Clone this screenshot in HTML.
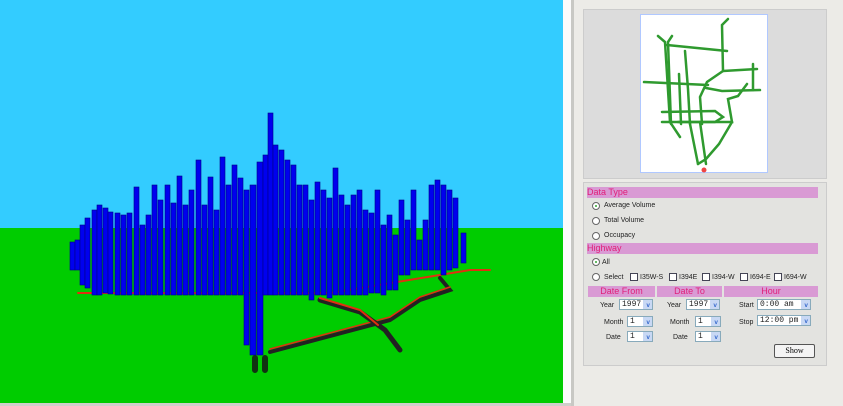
<!DOCTYPE html>
<html><head><meta charset="utf-8"><style>
*{margin:0;padding:0;box-sizing:border-box}
body{width:843px;height:406px;overflow:hidden;background:#ecebe7;font-family:"Liberation Sans",sans-serif;position:relative}
.abs{position:absolute}
.t{font-size:7px;color:#222;position:absolute;white-space:nowrap}
.hd{position:absolute;background:#d99ad4;color:#e0207a;font-size:9px;line-height:11px;height:11px}
.rad{position:absolute;width:8px;height:8px;border:1px solid #666;border-radius:50%;background:#fff}
.rad.on::after{content:"";position:absolute;left:2px;top:2px;width:2px;height:2px;background:#3a3;border-radius:50%}
.cb{position:absolute;width:8px;height:8px;border:1px solid #445;background:#fff}
.sel{position:absolute;height:11px;border:1px solid #8ab;background:#fff;font-family:"Liberation Mono",monospace;font-size:8px;line-height:9px;padding-left:2px;color:#222}
.sel::after{content:"";position:absolute;right:0;top:0;width:9px;height:9px;background:#c8d8f4}
.sel b{position:absolute;right:2px;top:1px;font-size:6px;color:#36c;z-index:1;font-weight:bold}
</style></head><body>
<svg class="abs" style="left:0;top:0" width="843" height="406">
<rect x="0" y="0" width="563" height="228" fill="#33ccff"/>
<rect x="0" y="228" width="563" height="175" fill="#00cc00"/>
<rect x="563" y="0" width="8" height="406" fill="#fbfbfb"/>
<rect x="571" y="0" width="3" height="406" fill="#c8c8c4"/>
<rect x="0" y="403" width="571" height="3" fill="#cfcfcb"/>
<g fill="none" stroke-linecap="round">
<path d="M78 293 L330 293 L470 270 L490 270" stroke="#e03010" stroke-width="2"/>
<path d="M270 352 L390 320 L420 300 L450 290 L440 278" stroke="#222" stroke-width="4"/>
<path d="M270 349 L390 317 L420 297 L450 287" stroke="#e03010" stroke-width="1.5"/>
<path d="M320 300 L360 312 L385 330 L400 350" stroke="#222" stroke-width="5"/>
<path d="M320 298 L360 310 L378 325" stroke="#e03010" stroke-width="2"/>
<path d="M255 358 L255 370 M265 358 L265 370" stroke="#113311" stroke-width="6"/>
</g>
<g fill="#0000ee" stroke="#000088" stroke-width="0.6">
<rect x="70" y="242" width="5" height="28"/><rect x="75" y="240" width="5" height="30"/>
<rect x="80" y="225" width="5" height="60"/><rect x="85" y="218" width="5" height="70"/>
<rect x="92" y="210" width="5" height="85"/><rect x="97" y="205" width="5" height="90"/>
<rect x="103" y="208" width="5" height="85"/><rect x="108" y="212" width="5" height="82"/>
<rect x="115" y="213" width="5" height="82"/><rect x="121" y="215" width="5" height="80"/>
<rect x="127" y="213" width="5" height="82"/><rect x="134" y="187" width="5" height="108"/>
<rect x="140" y="225" width="5" height="70"/><rect x="146" y="215" width="5" height="80"/>
<rect x="152" y="185" width="5" height="110"/><rect x="158" y="200" width="5" height="95"/>
<rect x="165" y="185" width="5" height="110"/><rect x="171" y="203" width="5" height="92"/>
<rect x="177" y="176" width="5" height="119"/><rect x="183" y="205" width="5" height="90"/>
<rect x="189" y="190" width="5" height="105"/><rect x="196" y="160" width="5" height="135"/>
<rect x="202" y="205" width="5" height="90"/><rect x="208" y="177" width="5" height="118"/>
<rect x="214" y="210" width="5" height="85"/><rect x="220" y="157" width="5" height="138"/>
<rect x="226" y="185" width="5" height="110"/><rect x="232" y="165" width="5" height="130"/>
<rect x="238" y="178" width="5" height="117"/><rect x="244" y="190" width="5" height="155"/>
<rect x="250" y="185" width="6" height="170"/><rect x="257" y="162" width="6" height="193"/>
<rect x="263" y="155" width="5" height="140"/><rect x="268" y="113" width="5" height="182"/>
<rect x="273" y="145" width="5" height="150"/><rect x="279" y="150" width="5" height="145"/>
<rect x="285" y="160" width="5" height="135"/><rect x="291" y="165" width="5" height="130"/>
<rect x="297" y="185" width="5" height="110"/><rect x="303" y="185" width="5" height="110"/>
<rect x="309" y="200" width="5" height="100"/><rect x="315" y="182" width="5" height="113"/>
<rect x="321" y="190" width="5" height="105"/><rect x="327" y="198" width="5" height="100"/>
<rect x="333" y="168" width="5" height="127"/><rect x="339" y="195" width="5" height="100"/>
<rect x="345" y="205" width="5" height="90"/><rect x="351" y="195" width="5" height="100"/>
<rect x="357" y="190" width="5" height="105"/><rect x="363" y="210" width="5" height="85"/>
<rect x="369" y="213" width="5" height="80"/><rect x="375" y="190" width="5" height="103"/>
<rect x="381" y="225" width="5" height="70"/><rect x="387" y="215" width="5" height="75"/>
<rect x="393" y="235" width="5" height="55"/><rect x="399" y="200" width="5" height="75"/>
<rect x="405" y="220" width="5" height="55"/><rect x="411" y="190" width="5" height="80"/>
<rect x="417" y="240" width="5" height="30"/><rect x="423" y="220" width="5" height="50"/>
<rect x="429" y="185" width="5" height="85"/><rect x="435" y="180" width="5" height="90"/>
<rect x="441" y="185" width="5" height="90"/><rect x="447" y="190" width="5" height="80"/>
<rect x="453" y="198" width="5" height="70"/><rect x="461" y="233" width="5" height="30"/>
</g>
</svg>
<!-- map box -->
<div class="abs" style="left:583px;top:9px;width:244px;height:170px;border:1px solid #ccc;background:#dcdcdc"></div>
<svg class="abs" style="left:640px;top:14px" width="128" height="160">
<rect x="0.5" y="0.5" width="127" height="158" fill="#fff" stroke="#b0c8ff"/>
<g fill="none" stroke="#2f9a2f" stroke-width="2.5" stroke-linecap="round">
<path d="M18 22 L25 28 L30 108 L40 123"/><path d="M32 22 L28 28 L31 110"/>
<path d="M27 31 L87 37"/><path d="M88 5 L82 11 L83 57 L67 68 L60 83 L62 110"/>
<path d="M45 37 L48 75 L50 110"/><path d="M4 68 L68 71"/>
<path d="M66 74 L82 77 L120 76"/><path d="M83 57 L117 55"/>
<path d="M113 50 L113 76"/><path d="M39 60 L41 110"/>
<path d="M22 98 L75 97 L83 103 L75 108 L22 108"/>
<path d="M38 108 L92 108 L88 85 L98 82 L107 70"/><path d="M92 108 L79 130 L66 145 L58 150"/>
<path d="M60 108 L66 150 M50 110 L58 150"/>
</g><circle cx="64" cy="156" r="2.5" fill="#e44"/></svg>
<!-- form -->
<div class="abs" style="left:583px;top:182px;width:244px;height:184px;border:1px solid #ccc;background:#e3e3e0"></div>
<div class="hd" style="left:587px;top:187px;width:231px">Data Type</div>
<div class="rad on" style="left:592px;top:202px"></div><div class="t" style="left:604px;top:202px">Average Volume</div>
<div class="rad" style="left:592px;top:217px"></div><div class="t" style="left:604px;top:217px">Total Volume</div>
<div class="rad" style="left:592px;top:232px"></div><div class="t" style="left:604px;top:232px">Occupacy</div>
<div class="hd" style="left:587px;top:243px;width:231px">Highway</div>
<div class="rad on" style="left:592px;top:258px"></div><div class="t" style="left:602px;top:259px">All</div>
<div class="rad" style="left:592px;top:273px"></div><div class="t" style="left:604px;top:274px">Select</div>
<div class="cb" style="left:630px;top:273px"></div><div class="t" style="left:640px;top:274px">I35W-S</div>
<div class="cb" style="left:669px;top:273px"></div><div class="t" style="left:679px;top:274px">I394E</div>
<div class="cb" style="left:702px;top:273px"></div><div class="t" style="left:712px;top:274px">I394-W</div>
<div class="cb" style="left:740px;top:273px"></div><div class="t" style="left:750px;top:274px">I694-E</div>
<div class="cb" style="left:774px;top:273px"></div><div class="t" style="left:784px;top:274px">I694-W</div>
<div class="hd" style="left:588px;top:286px;width:67px;text-align:center">Date From</div>
<div class="hd" style="left:657px;top:286px;width:65px;text-align:center">Date To</div>
<div class="hd" style="left:724px;top:286px;width:94px;text-align:center">Hour</div>
<div class="t" style="left:600px;top:302px">Year</div><div class="sel" style="left:619px;top:299px;width:34px">1997<b>v</b></div>
<div class="t" style="left:604px;top:319px">Month</div><div class="sel" style="left:627px;top:316px;width:26px">1<b>v</b></div>
<div class="t" style="left:606px;top:334px">Date</div><div class="sel" style="left:627px;top:331px;width:26px">1<b>v</b></div>
<div class="t" style="left:667px;top:302px">Year</div><div class="sel" style="left:686px;top:299px;width:34px">1997<b>v</b></div>
<div class="t" style="left:670px;top:319px">Month</div><div class="sel" style="left:695px;top:316px;width:26px">1<b>v</b></div>
<div class="t" style="left:673px;top:334px">Date</div><div class="sel" style="left:695px;top:331px;width:26px">1<b>v</b></div>
<div class="t" style="left:739px;top:302px">Start</div><div class="sel" style="left:757px;top:299px;width:54px">0:00 am<b>v</b></div>
<div class="t" style="left:739px;top:319px">Stop</div><div class="sel" style="left:757px;top:315px;width:54px">12:00 pm<b>v</b></div>
<div class="abs" style="left:774px;top:344px;width:41px;height:14px;border:1px solid #555;border-radius:2px;background:#f4f4f4;font-family:'Liberation Serif',serif;font-size:8px;text-align:center;line-height:12px">Show</div>
</body></html>
